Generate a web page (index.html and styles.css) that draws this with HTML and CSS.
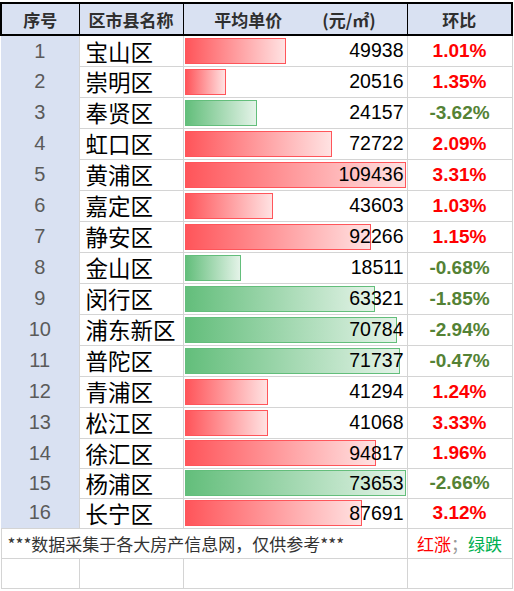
FILE: index.html
```html
<!DOCTYPE html>
<html lang="zh-CN">
<head>
  <meta charset="UTF-8">
  <meta name="viewport" content="width=device-width, initial-scale=1.0">
  <title>上海各区房价</title>
  <link rel="stylesheet" href="styles.css">
</head>
<body>
<table class="sheet">
  <colgroup>
    <col class="c-seq">
    <col class="c-name">
    <col class="c-price">
    <col class="c-ratio">
  </colgroup>
  <tr class="head">
    <th>序号</th>
    <th>区市县名称</th>
    <th><span class="title">平均单价</span><span>(元/㎡)</span></th>
    <th>环比</th>
  </tr>
  <tr class="row">
    <td class="seq">1</td><td class="name">宝山区</td>
    <td><div class="cell"><span class="bar up" style="width:101px"></span><span class="num">49938</span></div></td>
    <td class="pct up">1.01%</td>
  </tr>
  <tr class="row">
    <td class="seq">2</td><td class="name">崇明区</td>
    <td><div class="cell"><span class="bar up" style="width:41px"></span><span class="num">20516</span></div></td>
    <td class="pct up">1.35%</td>
  </tr>
  <tr class="row">
    <td class="seq">3</td><td class="name">奉贤区</td>
    <td><div class="cell"><span class="bar down" style="width:72px"></span><span class="num">24157</span></div></td>
    <td class="pct down">-3.62%</td>
  </tr>
  <tr class="row">
    <td class="seq">4</td><td class="name">虹口区</td>
    <td><div class="cell"><span class="bar up" style="width:147px"></span><span class="num">72722</span></div></td>
    <td class="pct up">2.09%</td>
  </tr>
  <tr class="row">
    <td class="seq">5</td><td class="name">黄浦区</td>
    <td><div class="cell"><span class="bar up" style="width:221px"></span><span class="num">109436</span></div></td>
    <td class="pct up">3.31%</td>
  </tr>
  <tr class="row">
    <td class="seq">6</td><td class="name">嘉定区</td>
    <td><div class="cell"><span class="bar up" style="width:88px"></span><span class="num">43603</span></div></td>
    <td class="pct up">1.03%</td>
  </tr>
  <tr class="row">
    <td class="seq">7</td><td class="name">静安区</td>
    <td><div class="cell"><span class="bar up" style="width:186px"></span><span class="num">92266</span></div></td>
    <td class="pct up">1.15%</td>
  </tr>
  <tr class="row">
    <td class="seq">8</td><td class="name">金山区</td>
    <td><div class="cell"><span class="bar down" style="width:56px"></span><span class="num">18511</span></div></td>
    <td class="pct down">-0.68%</td>
  </tr>
  <tr class="row">
    <td class="seq">9</td><td class="name">闵行区</td>
    <td><div class="cell"><span class="bar down" style="width:190px"></span><span class="num">63321</span></div></td>
    <td class="pct down">-1.85%</td>
  </tr>
  <tr class="row">
    <td class="seq">10</td><td class="name">浦东新区</td>
    <td><div class="cell"><span class="bar down" style="width:212px"></span><span class="num">70784</span></div></td>
    <td class="pct down">-2.94%</td>
  </tr>
  <tr class="row">
    <td class="seq">11</td><td class="name">普陀区</td>
    <td><div class="cell"><span class="bar down" style="width:215px"></span><span class="num">71737</span></div></td>
    <td class="pct down">-0.47%</td>
  </tr>
  <tr class="row">
    <td class="seq">12</td><td class="name">青浦区</td>
    <td><div class="cell"><span class="bar up" style="width:83px"></span><span class="num">41294</span></div></td>
    <td class="pct up">1.24%</td>
  </tr>
  <tr class="row">
    <td class="seq">13</td><td class="name">松江区</td>
    <td><div class="cell"><span class="bar up" style="width:83px"></span><span class="num">41068</span></div></td>
    <td class="pct up">3.33%</td>
  </tr>
  <tr class="row short">
    <td class="seq">14</td><td class="name">徐汇区</td>
    <td><div class="cell"><span class="bar up" style="width:191px"></span><span class="num">94817</span></div></td>
    <td class="pct up">1.96%</td>
  </tr>
  <tr class="row short">
    <td class="seq">15</td><td class="name">杨浦区</td>
    <td><div class="cell"><span class="bar down" style="width:221px"></span><span class="num">73653</span></div></td>
    <td class="pct down">-2.66%</td>
  </tr>
  <tr class="row short last">
    <td class="seq">16</td><td class="name">长宁区</td>
    <td><div class="cell"><span class="bar up" style="width:177px"></span><span class="num">87691</span></div></td>
    <td class="pct up">3.12%</td>
  </tr>
  <tr class="foot">
    <td colspan="3" class="note">***数据采集于各大房产信息网，仅供参考***</td>
    <td class="legend"><span class="red">红涨</span>；<span class="green">绿跌</span></td>
  </tr>
  <tr class="blank">
    <td></td><td></td><td></td><td></td>
  </tr>
</table>
</body>
</html>
```

FILE: styles.css
```css
body {
  margin: 0;
  padding-top: 2px;
  background-color: #ffffff;
  font-family: "Liberation Sans", Arial, "Noto Sans CJK SC", sans-serif;
}
.sheet {
  border-collapse: collapse;
  table-layout: fixed;
  width: 511px;
}
.c-seq { width: 78px; }
.c-name { width: 104px; }
.c-price { width: 224px; }
.c-ratio { width: 105px; }
.sheet td {
  padding: 0;
  border: 1px solid #d4d4d4;
}
.head th {
  height: 30px;
  padding: 0;
  background-color: #d9e1f2;
  border: 1px solid #000000;
  border-top-width: 2px;
  border-bottom-width: 2px;
  font: bold 17px "Noto Sans CJK SC", sans-serif;
  color: #2f2f2f;
}
.head th:first-child { border-left-width: 2px; }
.head th:last-child { border-right-width: 2px; }
.head .title { margin-right: 40px; }
.row { height: 31px; }
.row.short { height: 30px; }
.sheet .seq {
  background-color: #d9e1f2;
  border-top: none;
  border-bottom: none;
  border-left: none;
  text-align: center;
  font-size: 20px;
  color: #5a5a5a;
}
.sheet .last .seq { border-bottom: 1px solid #d4d4d4; }
.sheet .name {
  padding-left: 6px;
  font: 22.5px "Noto Sans CJK SC", sans-serif;
  color: #000000;
  white-space: nowrap;
  line-height: 1;
}
.cell {
  display: grid;
  align-items: center;
  height: 29px;
}
.short .cell { height: 28px; }
.cell > span { grid-area: 1 / 1; }
.bar {
  justify-self: start;
  height: 26px;
  margin-left: 1px;
  box-sizing: border-box;
  border: 1px solid;
}
.bar.up {
  border-color: #ff555a;
  background: linear-gradient(to right, #ff555a, #ffe2e2);
}
.bar.down {
  border-color: #63be7b;
  background: linear-gradient(to right, #63be7b, #e4f3e8);
}
.num {
  justify-self: end;
  padding-right: 3px;
  font-size: 19.5px;
  color: #000000;
}
.pct {
  text-align: center;
  font-size: 19px;
  font-weight: bold;
}
.pct.up { color: #ff0000; }
.pct.down { color: #548235; }
.foot, .blank { height: 30px; }
.sheet .note {
  padding-left: 6px;
  font: 17px "Noto Sans CJK SC", sans-serif;
  color: #333333;
}
.legend {
  text-align: center;
  font: 17px "Noto Sans CJK SC", sans-serif;
  color: #999999;
}
.legend .red { color: #ff0000; }
.legend .green { color: #00b050; }
```
